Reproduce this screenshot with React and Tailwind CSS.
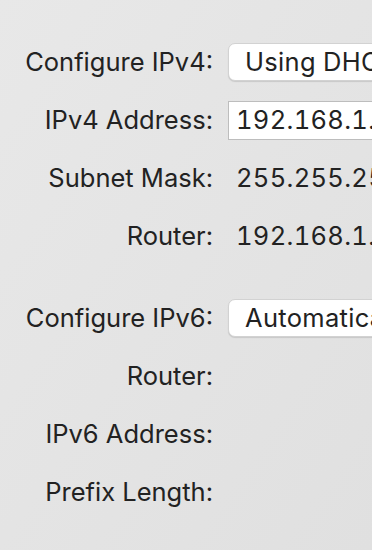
import React from 'react';

const font = { fontFamily: 'Inter, "Noto Sans", sans-serif' };

const Row = ({ label, children }) => (
    <div className="flex h-[58px] items-center">
        <div className="w-[213px] shrink-0 whitespace-nowrap text-right">{label}</div>
        <div className="ml-[15px] flex min-w-0 items-center tabular-nums tracking-[0.3px]">{children}</div>
    </div>
);

// popup button, runs past the window edge
const Popup = ({ value }) => (
    <div className="flex h-[38px] w-[220px] shrink-0 items-center whitespace-nowrap rounded-[7px] border border-[#d2d2d2] bg-white pl-[16px] shadow-[0_1px_1px_rgba(0,0,0,0.12)]">
        {value}
    </div>
);

const Field = ({ value }) => (
    <div className="flex h-[39px] w-[220px] shrink-0 items-center whitespace-nowrap border border-[#bdbdbd] bg-white pl-[7px]">
        {value}
    </div>
);

const Value = ({ value }) => <div className="whitespace-nowrap pl-[8px]">{value}</div>;

export default function App() {
    return (
        <div
            className="h-[550px] w-[372px] overflow-hidden bg-gradient-to-br from-[#e8e8e8] to-[#e0e0e0] pt-[33px] text-[25.5px] text-[#222222]"
            style={font}
        >
            <Row label="Configure IPv4:"><Popup value="Using DHCP" /></Row>
            <Row label="IPv4 Address:"><Field value="192.168.1.23" /></Row>
            <Row label="Subnet Mask:"><Value value="255.255.255.0" /></Row>
            <Row label="Router:"><Value value="192.168.1.1" /></Row>
            <div className="h-[24px]" />
            <Row label="Configure IPv6:"><Popup value="Automatically" /></Row>
            <Row label="Router:" />
            <Row label="IPv6 Address:" />
            <Row label="Prefix Length:" />
        </div>
    );
}
